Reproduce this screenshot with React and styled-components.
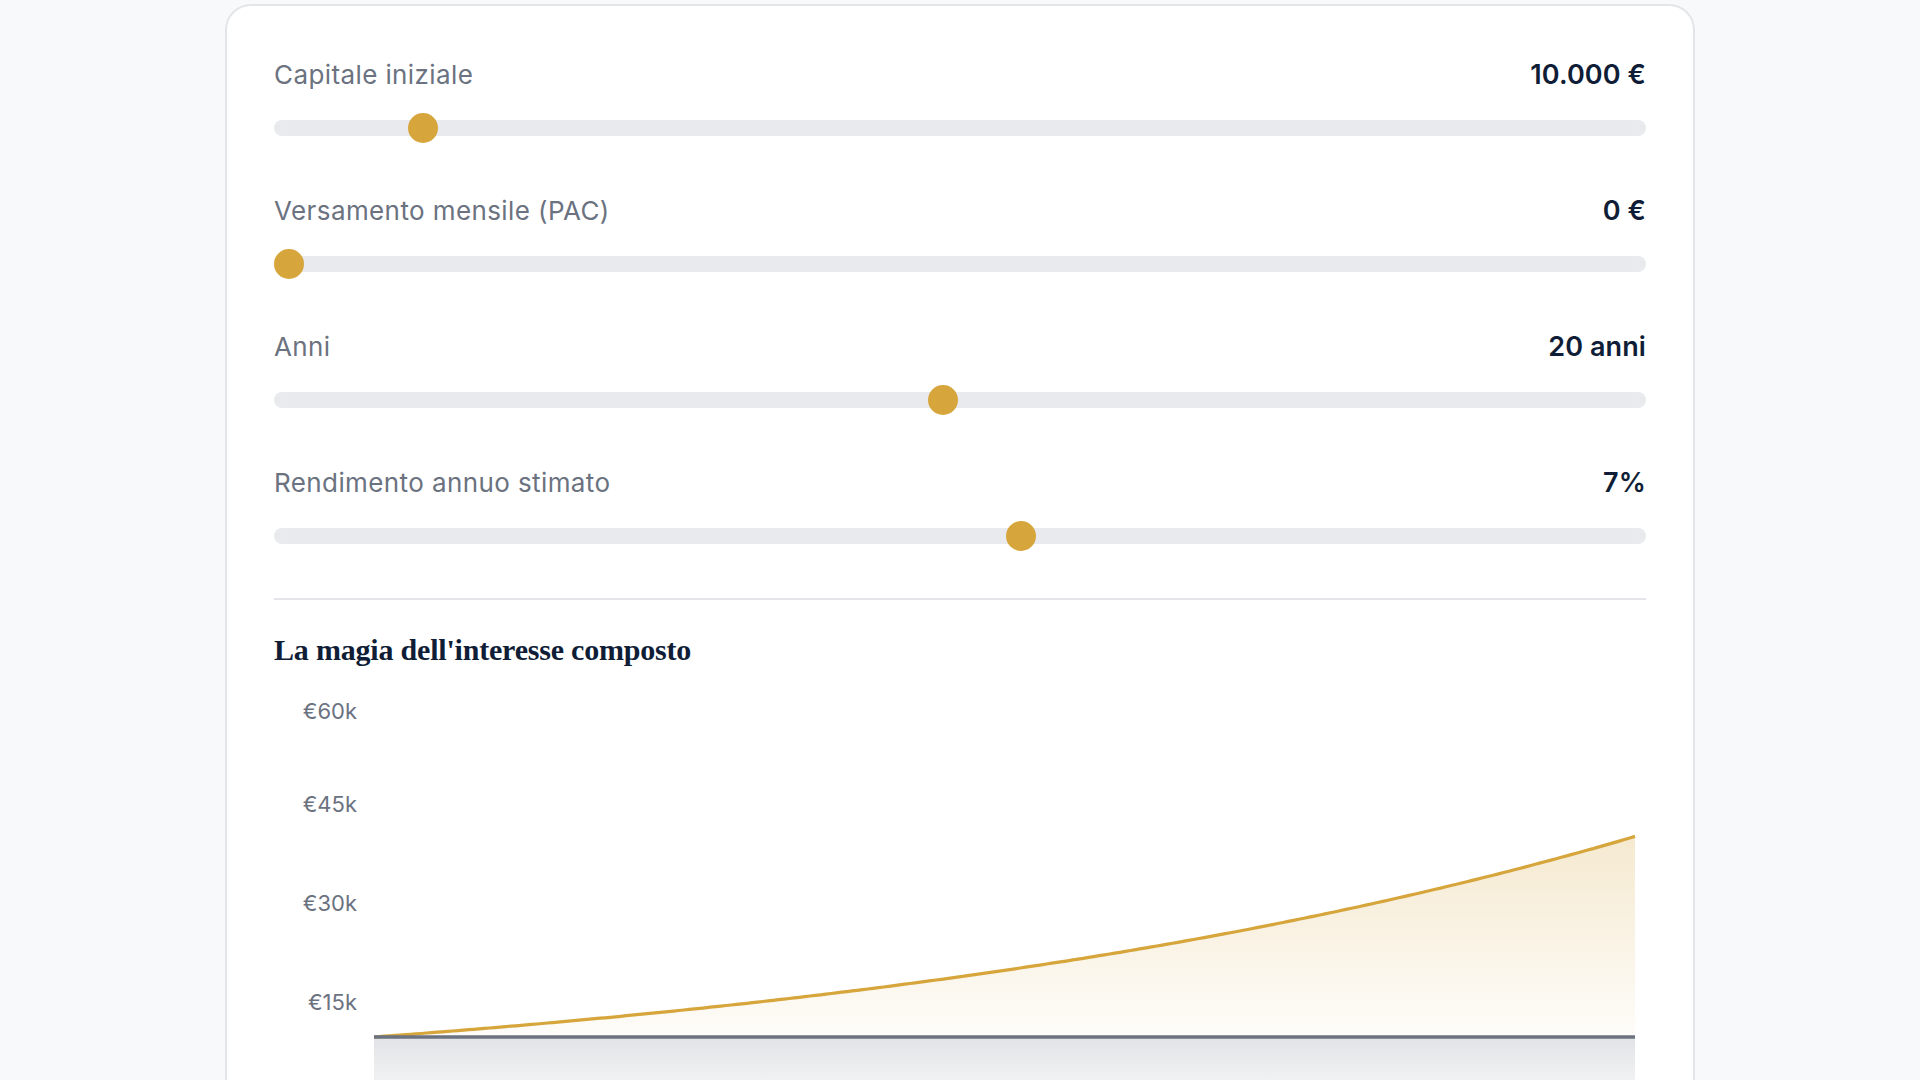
import React from 'react';
import styled, {createGlobalStyle} from "styled-components";

const colors = {
    page: '#f8f9fb',
    border: '#e4e5e8',
    label: '#6b7280',
    value: '#0f1d36',
    track: '#e9eaee',
    gold: '#d6a53b',
    grey: '#6b7280',
};

const sliders = [
    {label: 'Capitale iniziale', value: 10000, min: 0, max: 100000, text: '10.000 €'},
    {label: 'Versamento mensile (PAC)', value: 0, min: 0, max: 2000, text: '0 €'},
    {label: 'Anni', value: 20, min: 1, max: 40, text: '20 anni'},
    {label: 'Rendimento annuo stimato', value: 7, min: 1, max: 12, text: '7%'},
];

const GlobalStyle = createGlobalStyle`
body {
    margin: 0;
    background: ${colors.page};
    font-family: Inter, "Noto Sans", sans-serif;
    overflow: hidden;
}
`;

// chart geometry (svg units == px)
const W = 1372;
const H = 440;
const X0 = 100;
const X1 = 1361;
const yOf = v => 412 - (v / 15000) * 99;

const buildCurve = () => {
    const months = 240;
    const rate = 0.07 / 12;
    const pts = [];
    for (let m = 0; m <= months; m++) {
        const v = 10000 * Math.pow(1 + rate, m);
        pts.push([X0 + (m / months) * (X1 - X0), yOf(v)]);
    }
    return pts;
};

const Chart = () => {
    const pts = buildCurve();
    const line = pts.map(([x, y], i) => `${i ? 'L' : 'M'}${x.toFixed(1)} ${y.toFixed(1)}`).join(' ');
    const base = yOf(10000);
    const goldArea = `${line} L${X1} ${base} L${X0} ${base} Z`;
    const greyArea = `M${X0} ${base} L${X1} ${base} L${X1} ${yOf(0)} L${X0} ${yOf(0)} Z`;
    // the top label sits a little lower than its grid value
    const ticks = [
        {v: 60000, y: yOf(60000) + 6},
        {v: 45000, y: yOf(45000)},
        {v: 30000, y: yOf(30000)},
        {v: 15000, y: yOf(15000)},
    ];

    return (
        <ChartSvg width={W} height={H} viewBox={`0 0 ${W} ${H}`}>
            <defs>
                <linearGradient id="goldFill" x1="0" y1="0" x2="0" y2="1">
                    <stop offset="0" stopColor={colors.gold} stopOpacity="0.24"/>
                    <stop offset="1" stopColor={colors.gold} stopOpacity="0.03"/>
                </linearGradient>
                <linearGradient id="greyFill" x1="0" y1="0" x2="0" y2="1">
                    <stop offset="0" stopColor={colors.grey} stopOpacity="0.2"/>
                    <stop offset="1" stopColor={colors.grey} stopOpacity="0.04"/>
                </linearGradient>
            </defs>
            {ticks.map(t => (
                <TickText key={t.v} x={83} y={t.y} textAnchor="end" dominantBaseline="middle">
                    €{t.v / 1000}k
                </TickText>
            ))}
            <path d={goldArea} fill="url(#goldFill)"/>
            <path d={greyArea} fill="url(#greyFill)"/>
            <path d={line} fill="none" stroke={colors.gold} strokeWidth="3.2"/>
            <line x1={X0} y1={base} x2={X1} y2={base} stroke={colors.grey} strokeWidth="3.5"/>
        </ChartSvg>
    );
};

const Slider = ({label, value, min, max, text}) => {
    const pct = (value - min) / (max - min);
    return (
        <Group>
            <Header>
                <Label>{label}</Label>
                <Value>{text}</Value>
            </Header>
            <Rail>
                <Track/>
                <Thumb style={{left: `calc(${pct} * (100% - 30px))`}}/>
            </Rail>
        </Group>
    );
};

const App = () => (
    <>
        <GlobalStyle/>
        <Page>
            <Card>
                <Sliders>
                    {sliders.map(s => <Slider key={s.label} {...s}/>)}
                </Sliders>
                <Divider/>
                <Title>La magia dell'interesse composto</Title>
                <Chart/>
            </Card>
        </Page>
    </>
);

const Page = styled.div`
width: 100%;
display: flex;
justify-content: center;
padding-top: 4px;
`;

const Card = styled.div`
width: 1470px;
box-sizing: border-box;
background: #fff;
border: 2px solid ${colors.border};
border-radius: 26px;
padding: 51px 47px 60px;
`;

const Sliders = styled.div`
display: flex;
flex-direction: column;
gap: 50px;
`;

const Group = styled.div`
display: flex;
flex-direction: column;
gap: 20px;
`;

const Header = styled.div`
display: flex;
justify-content: space-between;
align-items: center;
height: 36px;
line-height: 36px;
`;

const Label = styled.span`
color: ${colors.label};
font-size: 26px;
font-weight: 400;
letter-spacing: 0.4px;
`;

const Value = styled.span`
color: ${colors.value};
font-size: 27px;
font-weight: 600;
letter-spacing: 0.1px;
`;

const Rail = styled.div`
position: relative;
height: 30px;
display: flex;
align-items: center;
`;

const Track = styled.div`
width: 100%;
height: 16px;
border-radius: 8px;
background: ${colors.track};
`;

const Thumb = styled.div`
position: absolute;
top: 0;
width: 30px;
height: 30px;
border-radius: 50%;
background: ${colors.gold};
`;

const Divider = styled.hr`
border: none;
height: 2px;
background: ${colors.border};
margin: 47px 0 0;
`;

const Title = styled.h3`
margin: 32px 0 0;
font-family: "Liberation Serif", "DejaVu Serif", serif;
font-weight: 700;
font-size: 30px;
line-height: 36px;
color: ${colors.value};
letter-spacing: -0.2px;
`;

const ChartSvg = styled.svg`
display: block;
margin-top: 23px;
overflow: visible;
`;

const TickText = styled.text`
font-family: Inter, "Noto Sans", sans-serif;
font-size: 22px;
fill: ${colors.label};
`;

export default App;
